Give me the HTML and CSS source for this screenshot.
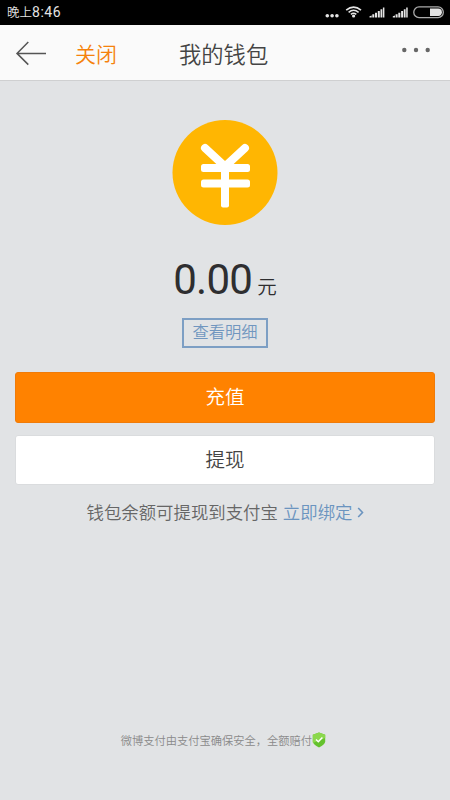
FILE: index.html
```html
<!DOCTYPE html>
<html lang="zh-CN">
<head>
<meta charset="utf-8">
<title>我的钱包</title>
<link rel="stylesheet" href="styles.css">
</head>
<body>
<div class="status">
  <span class="time">晚上<span class="clock">8:46</span></span>
  <svg class="status-icons" width="125" height="25" viewBox="0 0 125 25">
    <g fill="#e4e4e4">
      <circle cx="2.3" cy="15.8" r="1.8"/><circle cx="7.1" cy="15.8" r="1.8"/><circle cx="11.9" cy="15.8" r="1.8"/>
      <circle cx="28.6" cy="16" r="1.6"/>
      <g id="signal">
        <path d="M44.5 17.5v-1.3l2.2-.7v2zM47.3 17.5v-3.2h2v3.2zM50 17.5v-4.8h2v4.8zM52.8 17.5v-6.500h2v6.500zM55.500 17.500V9.200h1.800v8.300zM57.900 17.500V7.500h1.500v10z"/>
      </g>
      <use href="#signal" x="23.3"/>
    </g>
    <g fill="none" stroke="#e4e4e4" stroke-width="1.6">
      <path d="M21.2 10.2Q28.6 4 36 10.2M23.6 12.3Q28.6 8.2 33.6 12.3M25.9 14.3Q28.6 12.2 31.3 14.3"/>
    </g>
    <rect x="88.8" y="6.9" width="29.5" height="10.7" rx="5.2" fill="none" stroke="#aaa" stroke-width="1.3"/>
    <path d="M105 8.500h8.200a3.700 3.700 0 0 1 0 7.400H105z" fill="#e4e4e4"/>
  </svg>
</div>
<header class="nav">
  <svg class="back" width="32" height="26" viewBox="0 0 32 26" fill="none" stroke="#555" stroke-width="1.5"><path d="M31 13.4H2.3M13.3 2L2 13.4l11.3 11.2"/></svg>
  <span class="close">关闭</span>
  <h1 class="title">我的钱包</h1>
  <svg class="more" width="30" height="6" viewBox="0 0 30 6" fill="#666"><circle cx="3.3" cy="3" r="2.2"/><circle cx="15" cy="3" r="2.2"/><circle cx="26.7" cy="3" r="2.2"/></svg>
</header>
<main class="wallet">
  <svg class="coin" width="106" height="106" viewBox="0 0 106 106">
    <circle cx="53" cy="53.5" r="52.5" fill="#ffb602"/>
    <path d="M33 29l20 18.500L73 29" fill="none" stroke="#fff" stroke-width="8" stroke-linecap="round"/>
    <g fill="#fff">
      <rect x="49" y="46" width="8" height="42.5" rx="2"/>
      <rect x="29" y="45" width="49" height="8" rx="2.5"/>
      <rect x="29" y="60.5" width="49" height="8" rx="2.5"/>
    </g>
  </svg>
  <div class="balance"><span class="amount">0.00</span><span class="unit">元</span></div>
  <a class="detail">查看明细</a>
  <a class="button primary">充值</a>
  <a class="button secondary">提现</a>
  <p class="hint"><span>钱包余额可提现到支付宝</span><a class="bind">立即绑定</a><svg class="chevron" width="7" height="11" viewBox="0 0 7 11" fill="none" stroke="#6b94bf" stroke-width="1.6"><path d="M1.2 1l4.3 4.5L1.2 10"/></svg></p>
  <footer class="guarantee">
    <span>微博支付由支付宝确保安全，全额赔付</span>
    <svg width="14" height="16" viewBox="0 0 14 16"><path d="M7 .5L13.2 2.8V9.500Q13 12.500 7 15.500Q1 12.500.8 9.500V2.800z" fill="#64c22d"/><path d="M7 .5L13.200 2.800V6L.8 11V2.800z" fill="#8bd84d"/><path d="M4 7.500l2.300 2.200 4.100-4.300" fill="none" stroke="#fff" stroke-width="1.5"/></svg>
  </footer>
</main>
</body>
</html>
```
FILE: styles.css
```css
* { box-sizing: border-box; }
body {
  margin: 0;
  height: 800px;
  display: flex;
  flex-direction: column;
  background: #e1e3e5;
  font-family: "Noto Sans CJK SC", sans-serif;
  font-weight: 350;
  color: #444;
  white-space: nowrap;
}
svg { display: block; flex: none; }
.status {
  height: 25px;
  padding-left: 7px;
  display: flex;
  justify-content: space-between;
  background: #000;
  color: #e4e4e4;
}
.time { font-size: 12.5px; line-height: 24px; }
.clock { font-family: Roboto, sans-serif; font-size: 14px; font-weight: 400; letter-spacing: .5px; }
.nav {
  height: 56px;
  display: flex;
  align-items: center;
  padding: 0 19px 0 15px;
  background: #fafafa;
  border-bottom: 1px solid #cfd0d1;
}
.back { margin-top: 1px; }
.close { width: 104px; margin-left: 28px; font-size: 21px; line-height: 56px; color: #f5820c; }
.title { margin: 0; font-size: 22.3px; line-height: 56px; font-weight: 350; color: #444; }
.more { margin: 0 0 6px auto; }
.wallet {
  flex: 1;
  display: flex;
  flex-direction: column;
  align-items: center;
  padding: 38px 15px 0;
}
.balance {
  height: 52px;
  margin-top: 29px;
  display: flex;
  align-items: baseline;
  line-height: 52px;
  color: #2e2e30;
}
.amount { font-family: Roboto, sans-serif; font-size: 42px; font-weight: 400; letter-spacing: -.7px; }
.unit { margin-left: 5px; font-size: 19.5px; }
.detail {
  width: 86px;
  height: 30px;
  margin-top: 12px;
  border: 2px solid #7d9fc4;
  text-align: center;
  font-size: 16.3px;
  line-height: 23px;
  color: #7096bf;
}
.button {
  width: 420px;
  border-radius: 3px;
  text-align: center;
  font-size: 19.5px;
}
.primary {
  height: 51px;
  margin-top: 24px;
  line-height: 46px;
  background: #ff8200;
  border: 1px solid #f07b08;
  color: #fff;
}
.secondary {
  height: 50px;
  margin-top: 12px;
  line-height: 46px;
  background: #fff;
  border: 1px solid #dadcde;
  color: #444;
}
.hint {
  margin: 14px 0 0 1px;
  display: flex;
  align-items: center;
  font-size: 17.4px;
  line-height: 26px;
  color: #666;
}
.bind { margin-left: 5px; color: #6b94bf; }
.chevron { margin-left: 5px; }
.guarantee {
  margin: auto 0 52px;
  padding-right: 3px;
  display: flex;
  align-items: center;
  font-size: 11.25px;
  line-height: 16px;
  color: #8a8a8a;
}
```
